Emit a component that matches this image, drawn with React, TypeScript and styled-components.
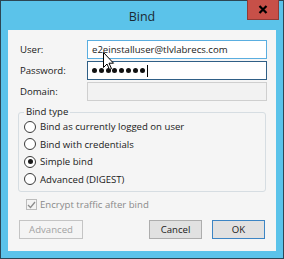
import React from 'react';
import styled, { createGlobalStyle } from 'styled-components';

const GlobalStyle = createGlobalStyle`
  html, body {
    margin: 0;
    padding: 0;
    background: #5bc3ea;
  }
  body {
    font-family: 'Open Sans', 'Liberation Sans', sans-serif;
  }
`;

const Window = styled.div`
  position: relative;
  box-sizing: border-box;
  width: 284px;
  height: 259px;
  border: 1px solid #2c4654;
  background: #5bc3ea;
  display: flex;
  flex-direction: column;
  font-size: 9.6px;
  color: #1a1a1a;
`;

const TitleBar = styled.div`
  height: 29px;
  display: grid;
  grid-template-columns: 1fr auto 1fr;
  align-items: center;
`;

const Title = styled.div`
  grid-column: 2;
  font-size: 12.5px;
  color: #1c2a33;
  padding-top: 1px;
`;

const CloseButton = styled.div`
  grid-column: 3;
  justify-self: end;
  align-self: start;
  margin-top: -1px;
  margin-right: 4px;
  width: 32px;
  height: 20px;
  box-sizing: border-box;
  background: #c75048;
  border: 1px solid #8f3a35;
  border-top: none;
  display: flex;
  align-items: center;
  justify-content: center;
`;

const Client = styled.div`
  flex: 1;
  margin: 0 7px 7px;
  background: #f5f5f5;
  padding: 10px 9px 0 10px;
  display: flex;
  flex-direction: column;
`;

const FormGrid = styled.div`
  display: grid;
  grid-template-columns: 67px 1fr;
  row-gap: 2px;
  padding-left: 2px;
  align-items: center;
`;

const Label = styled.label`
  line-height: 19px;
`;

const Field = styled.div<{ $state: 'hover' | 'focus' | 'disabled' }>`
  box-sizing: border-box;
  height: 19px;
  display: flex;
  align-items: center;
  padding-left: 4px;
  border: 1px solid
    ${(p) =>
      p.$state === 'hover' ? '#5aaee0' : p.$state === 'focus' ? '#2f5f86' : '#cfcfcf'};
  background: ${(p) => (p.$state === 'disabled' ? '#f2f2f2' : '#ffffff')};
  white-space: nowrap;
  overflow: hidden;
`;

const Dot = styled.span`
  width: 5px;
  height: 5px;
  border-radius: 50%;
  background: #111;
  margin-right: 1.8px;
`;

const Caret = styled.span`
  display: inline-block;
  width: 1px;
  height: 12px;
  background: #000;
  margin-left: 1px;
`;

const Group = styled.fieldset`
  margin: 5px 1px 0 0;
  padding: 0 5px 3px;
  border: 1px solid #d6dde2;
  border-radius: 3px;
  min-width: 0;
`;

const Legend = styled.legend`
  padding: 0 2px;
  line-height: 12px;
`;

const Option = styled.div`
  height: 17.5px;
  display: flex;
  align-items: center;
  gap: 4px;
`;

const Radio = styled.span<{ $checked?: boolean }>`
  box-sizing: border-box;
  width: 12px;
  height: 12px;
  border-radius: 50%;
  border: 1px solid #3a3a3a;
  background: #fff;
  display: flex;
  align-items: center;
  justify-content: center;
  &::after {
    content: '';
    display: ${(p) => (p.$checked ? 'block' : 'none')};
    width: 5px;
    height: 5px;
    border-radius: 50%;
    background: #1a1a1a;
  }
`;

const CheckRow = styled.div`
  margin-top: 4px;
  height: 17px;
  display: flex;
  align-items: center;
  gap: 3px;
  padding-left: 8px;
  color: #8a8a8a;
`;

const CheckBox = styled.span`
  box-sizing: border-box;
  width: 11px;
  height: 11px;
  border: 1px solid #bcbcbc;
  background: #f4f4f4;
  display: flex;
  align-items: center;
  justify-content: center;
`;

const ButtonRow = styled.div`
  margin-top: 7px;
  display: flex;
  align-items: center;
  padding-left: 1px;
  padding-right: 2px;
`;

const Button = styled.div<{ $variant?: 'default' | 'disabled' }>`
  box-sizing: border-box;
  height: 19px;
  width: ${(p) => (p.$variant === 'disabled' ? '64px' : '53px')};
  display: flex;
  align-items: center;
  justify-content: center;
  border: 1px solid
    ${(p) =>
      p.$variant === 'default' ? '#3c85c4' : p.$variant === 'disabled' ? '#c4c4c4' : '#adadad'};
  background: ${(p) => (p.$variant === 'disabled' ? '#f4f4f4' : '#e1e1e1')};
  color: ${(p) => (p.$variant === 'disabled' ? '#a3a3a3' : '#1a1a1a')};
  & + & {
    margin-left: 10px;
  }
`;

const Spacer = styled.div`
  flex: 1;
`;

const Cursor = styled.svg`
  position: absolute;
  left: 102px;
  top: 51px;
`;

const options = [
  { label: 'Bind as currently logged on user' },
  { label: 'Bind with credentials' },
  { label: 'Simple bind', checked: true },
  { label: 'Advanced (DIGEST)' },
];

export default function App() {
  return (
    <>
      <GlobalStyle />
      <Window>
        <TitleBar>
          <Title>Bind</Title>
          <CloseButton>
            <svg width="10" height="9" viewBox="0 0 10 9">
              <path d="M1.5 1 L8.5 8 M8.5 1 L1.5 8" stroke="#000" strokeWidth="2.2" />
            </svg>
          </CloseButton>
        </TitleBar>
        <Client>
          <FormGrid>
            <Label>User:</Label>
            <Field $state="hover">e2einstalluser@tlvlabrecs.com</Field>
            <Label>Password:</Label>
            <Field $state="focus" aria-label="password, 8 characters">
              {Array.from({ length: 8 }, (_, i) => (
                <Dot key={i} />
              ))}
              <Caret />
            </Field>
            <Label>Domain:</Label>
            <Field $state="disabled" />
          </FormGrid>
          <Group>
            <Legend>Bind type</Legend>
            {options.map((o) => (
              <Option key={o.label}>
                <Radio $checked={o.checked} />
                {o.label}
              </Option>
            ))}
          </Group>
          <CheckRow>
            <CheckBox>
              <svg width="9" height="8" viewBox="0 0 9 8">
                <path d="M1 4 L3.5 6.5 L8 1" stroke="#8c8c8c" strokeWidth="1.3" fill="none" />
              </svg>
            </CheckBox>
            Encrypt traffic after bind
          </CheckRow>
          <ButtonRow>
            <Button $variant="disabled">Advanced</Button>
            <Spacer />
            <Button>Cancel</Button>
            <Button $variant="default">OK</Button>
          </ButtonRow>
        </Client>
        <Cursor width="12" height="19" viewBox="0 0 12 19">
          <path
            d="M0.5 0.5 L0.5 15.5 L4 12 L6.5 17.5 L8.5 16.6 L6 11.2 L10.5 11.2 Z"
            fill="#fff"
            stroke="#000"
            strokeWidth="1"
            strokeLinejoin="round"
          />
        </Cursor>
      </Window>
    </>
  );
}
